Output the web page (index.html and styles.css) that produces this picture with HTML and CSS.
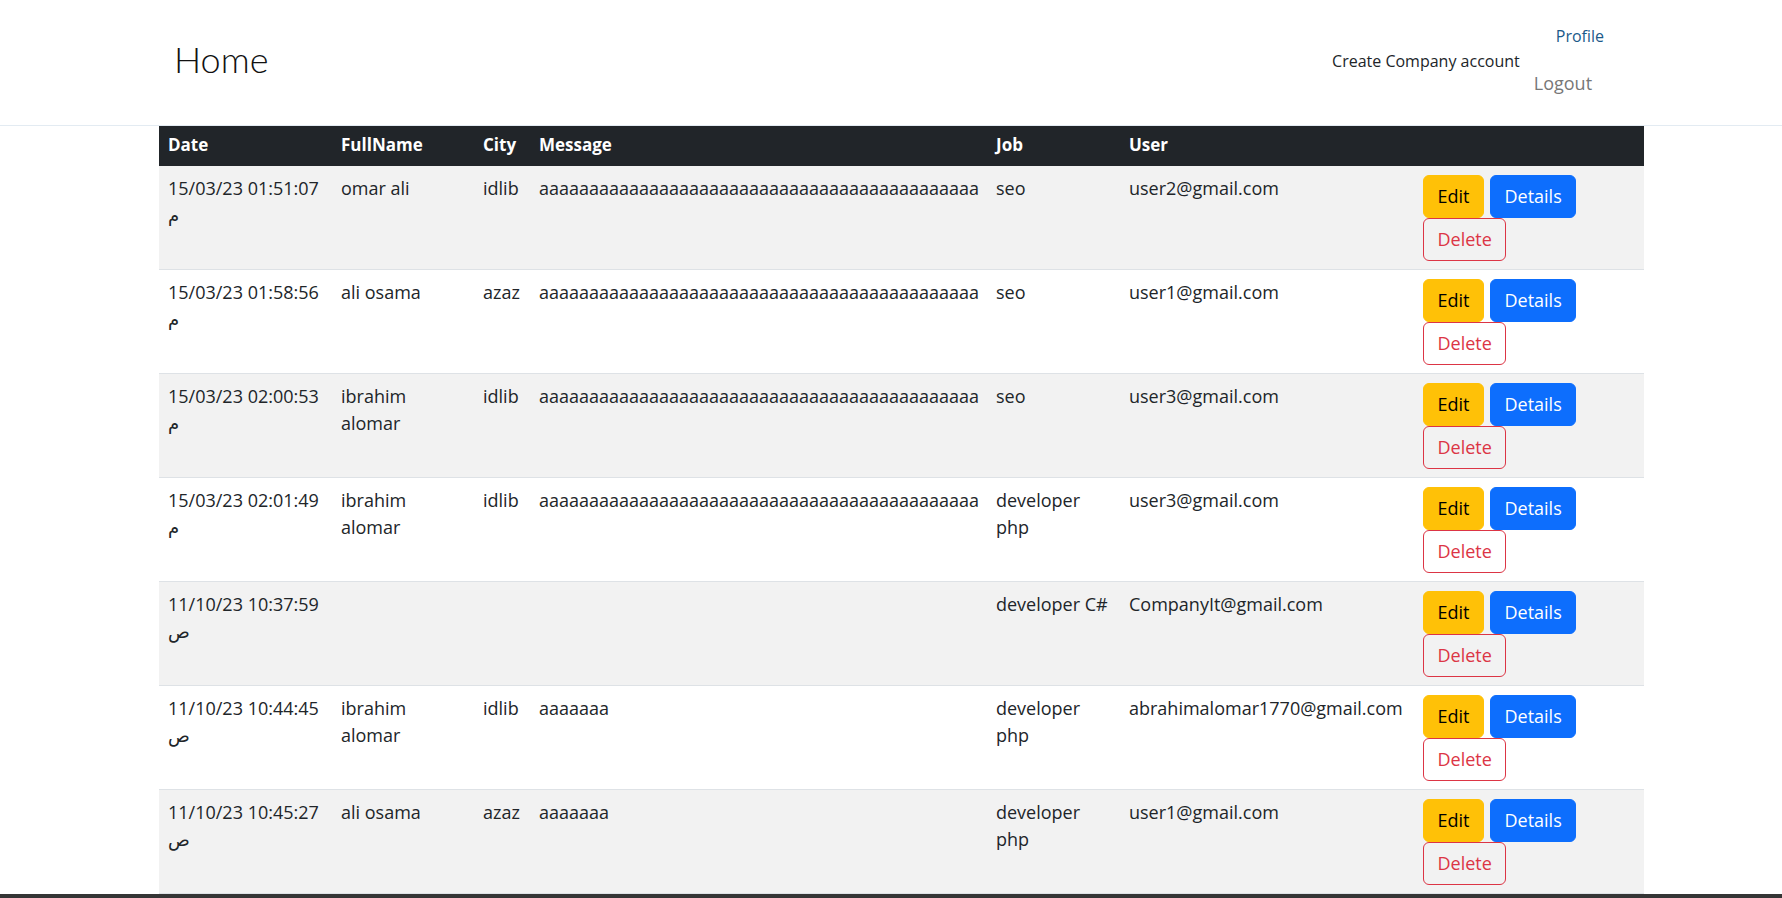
FILE: index.html
```html
<!DOCTYPE html>
<html lang="en">
<head>
<meta charset="utf-8">
<title>Home</title>
<link rel="stylesheet" href="styles.css">
</head>
<body>
<header class="site-header">
  <div class="header-inner">
    <a class="brand" href="#">Home</a>
    <nav class="nav">
      <a class="nav-create" href="#">Create Company account</a>
      <div class="nav-stack">
        <a class="nav-profile" href="#">Profile</a>
        <a class="nav-logout" href="#">Logout</a>
      </div>
    </nav>
  </div>
</header>
<main class="content">
  <table class="data-table">
    <colgroup>
      <col class="c-date"><col class="c-name"><col class="c-city"><col class="c-msg"><col class="c-job"><col class="c-user"><col class="c-act">
    </colgroup>
    <thead>
      <tr><th>Date</th><th>FullName</th><th>City</th><th>Message</th><th>Job</th><th>User</th><th></th></tr>
    </thead>
    <tbody>
      <tr>
        <td>15/03/23 01:51:07 م</td><td>omar ali</td><td>idlib</td><td>aaaaaaaaaaaaaaaaaaaaaaaaaaaaaaaaaaaaaaaaaaaa</td><td>seo</td><td>user2@gmail.com</td>
        <td><div class="actions"><a class="btn btn-edit" href="#">Edit</a><a class="btn btn-details" href="#">Details</a><a class="btn btn-delete" href="#">Delete</a></div></td>
      </tr>
      <tr>
        <td>15/03/23 01:58:56 م</td><td>ali osama</td><td>azaz</td><td>aaaaaaaaaaaaaaaaaaaaaaaaaaaaaaaaaaaaaaaaaaaa</td><td>seo</td><td>user1@gmail.com</td>
        <td><div class="actions"><a class="btn btn-edit" href="#">Edit</a><a class="btn btn-details" href="#">Details</a><a class="btn btn-delete" href="#">Delete</a></div></td>
      </tr>
      <tr>
        <td>15/03/23 02:00:53 م</td><td>ibrahim alomar</td><td>idlib</td><td>aaaaaaaaaaaaaaaaaaaaaaaaaaaaaaaaaaaaaaaaaaaa</td><td>seo</td><td>user3@gmail.com</td>
        <td><div class="actions"><a class="btn btn-edit" href="#">Edit</a><a class="btn btn-details" href="#">Details</a><a class="btn btn-delete" href="#">Delete</a></div></td>
      </tr>
      <tr>
        <td>15/03/23 02:01:49 م</td><td>ibrahim alomar</td><td>idlib</td><td>aaaaaaaaaaaaaaaaaaaaaaaaaaaaaaaaaaaaaaaaaaaa</td><td>developer php</td><td>user3@gmail.com</td>
        <td><div class="actions"><a class="btn btn-edit" href="#">Edit</a><a class="btn btn-details" href="#">Details</a><a class="btn btn-delete" href="#">Delete</a></div></td>
      </tr>
      <tr>
        <td>11/10/23 10:37:59 ص</td><td></td><td></td><td></td><td>developer C#</td><td>CompanyIt@gmail.com</td>
        <td><div class="actions"><a class="btn btn-edit" href="#">Edit</a><a class="btn btn-details" href="#">Details</a><a class="btn btn-delete" href="#">Delete</a></div></td>
      </tr>
      <tr>
        <td>11/10/23 10:44:45 ص</td><td>ibrahim alomar</td><td>idlib</td><td>aaaaaaa</td><td>developer php</td><td>abrahimalomar1770@gmail.com</td>
        <td><div class="actions"><a class="btn btn-edit" href="#">Edit</a><a class="btn btn-details" href="#">Details</a><a class="btn btn-delete" href="#">Delete</a></div></td>
      </tr>
      <tr>
        <td>11/10/23 10:45:27 ص</td><td>ali osama</td><td>azaz</td><td>aaaaaaa</td><td>developer php</td><td>user1@gmail.com</td>
        <td><div class="actions"><a class="btn btn-edit" href="#">Edit</a><a class="btn btn-details" href="#">Details</a><a class="btn btn-delete" href="#">Delete</a></div></td>
      </tr>
    </tbody>
  </table>
</main>
<footer class="site-footer"></footer>
</body>
</html>
```
FILE: styles.css
```css
html, body {
  margin: 0;
  padding: 0;
}
body {
  font-family: "Open Sans", "DejaVu Sans", sans-serif;
  color: #212529;
  background: #ffffff;
}
a {
  text-decoration: none;
}

/* header */
.site-header {
  height: 125px;
  border-bottom: 1px solid #e3ebf2;
}
.header-inner {
  margin-left: 159px;
  width: 1485px;
  box-sizing: border-box;
  padding: 0 15px;
  height: 100%;
  display: flex;
  align-items: center;
  justify-content: space-between;
}
.brand {
  font-family: "Lato", "Inter", sans-serif;
  font-weight: 300;
  font-size: 36px;
  line-height: 42px;
  color: #111;
  margin-bottom: 8px;
}
.nav {
  display: flex;
  align-items: center;
  gap: 14px;
  margin-right: 25px;
  margin-bottom: 4px;
}
.nav-create {
  font-size: 16px;
  line-height: 24px;
  color: #212529;
}
.nav-stack {
  display: flex;
  flex-direction: column;
  align-items: flex-start;
}
.nav-profile {
  font-size: 16px;
  line-height: 24px;
  color: #1b5a8a;
  margin-left: 22px;
  margin-bottom: 22px;
}
.nav-logout {
  font-size: 18px;
  line-height: 27px;
  color: #777777;
}

/* table */
.content {
  margin-left: 159px;
  width: 1485px;
}
.data-table {
  width: 100%;
  border-collapse: collapse;
  table-layout: fixed;
  font-size: 18px;
  line-height: 27px;
}
.c-date { width: 173px; }
.c-name { width: 142px; }
.c-city { width: 56px; }
.c-msg { width: 457px; }
.c-job { width: 133px; }
.c-user { width: 294px; }
.c-act { width: 230px; }

.data-table th {
  background: #212529;
  color: #ffffff;
  font-weight: 700;
  font-size: 17px;
  line-height: 24px;
  text-align: left;
  padding: 7px 9px 9px;
}
.data-table td {
  padding: 9px 9px 8px;
  vertical-align: top;
  border-bottom: 1px solid #dee2e6;
}
.data-table tbody tr:nth-child(odd) td {
  background: #f2f2f2;
}

.actions {
  display: flex;
  flex-wrap: wrap;
  column-gap: 6px;
}
.btn {
  display: block;
  box-sizing: border-box;
  font-size: 18px;
  line-height: 27px;
  padding: 7px 13.5px;
  border: 1px solid transparent;
  border-radius: 6px;
}
.btn-edit {
  background: #ffc107;
  border-color: #ffc107;
  color: #000000;
}
.btn-details {
  background: #0d6efd;
  border-color: #0d6efd;
  color: #ffffff;
}
.btn-delete {
  background: transparent;
  border-color: #dc3545;
  color: #dc3545;
}

.site-footer {
  height: 80px;
  background: #353535;
}
```
